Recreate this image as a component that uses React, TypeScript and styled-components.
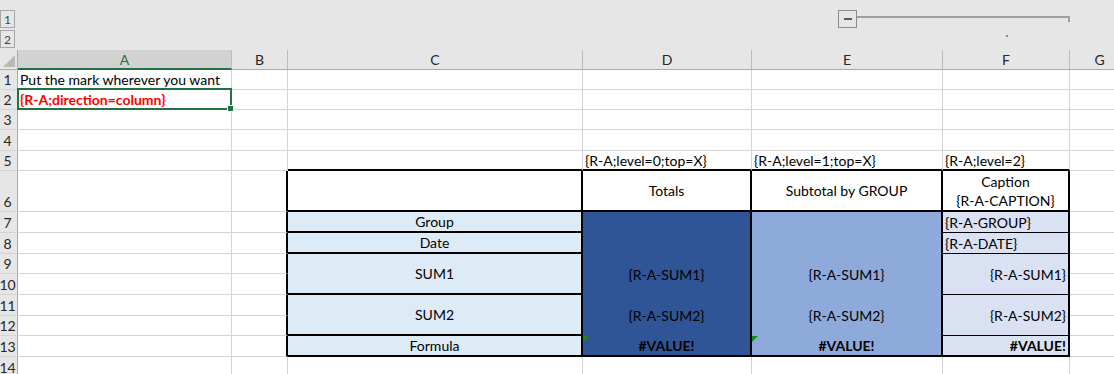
import React from 'react';
import styled, { createGlobalStyle, css } from 'styled-components';

type Edge = { w: number; c: string };
type Align = 'left' | 'center' | 'right';

interface Spec {
	text?: string;
	rs?: number;
	fill?: string;
	align?: Align;
	bold?: boolean;
	red?: boolean;
	right?: Edge;
	bottom?: Edge;
	selected?: boolean;
	flag?: boolean;
}

const GRID = '#d4d4d4';
const HEADER_BG = '#e6e6e6';
const EXCEL_GREEN = '#217346';

const PALE = '#ddebf7';
const NAVY = '#2f5597';
const SKY = '#8eaadb';
const MIST = '#d9e1f2';

const LINE: Edge = { w: 1, c: GRID };
const THICK: Edge = { w: 2, c: '#000' };
const THIN: Edge = { w: 1, c: '#000' };
const NONE: Edge = { w: 0, c: 'transparent' };

// row header + A..G
const COL_WIDTHS = [18, 214, 56, 295, 169, 191, 127, 60];
const ROW_HEIGHTS = [20, 20, 20, 21, 20, 41, 21, 21, 20, 21, 21, 20, 21, 21];
const LETTERS = ['A', 'B', 'C', 'D', 'E', 'F', 'G'];
const colTemplate = COL_WIDTHS.map((w) => `${w}px`).join(' ');

const key = (r: number, c: number) => `${r}:${c}`;

const body = (fill: string, extra: Spec): Spec => ({
	fill,
	align: 'center',
	right: THICK,
	bottom: THICK,
	...extra,
});

const specs: Record<string, Spec> = {
	[key(1, 1)]: { text: 'Put the mark wherever you want' },
	[key(2, 1)]: { text: '{R-A;direction=column}', red: true, bold: true, selected: true },
	[key(5, 3)]: { bottom: THICK },
	[key(5, 4)]: { text: '{R-A;level=0;top=X}', bottom: THICK },
	[key(5, 5)]: { text: '{R-A;level=1;top=X}', bottom: THICK },
	[key(5, 6)]: { text: '{R-A;level=2}', bottom: THICK },

	[key(6, 3)]: { right: THICK, bottom: THICK },
	[key(6, 4)]: { text: 'Totals', align: 'center', right: THICK, bottom: THICK },
	[key(6, 5)]: { text: 'Subtotal by GROUP', align: 'center', right: THICK, bottom: THICK },
	[key(6, 6)]: { text: 'Caption\n{R-A-CAPTION}', align: 'center', right: THICK, bottom: THICK },

	[key(7, 3)]: body(PALE, { text: 'Group' }),
	[key(8, 3)]: body(PALE, { text: 'Date' }),
	[key(9, 3)]: body(PALE, { text: 'SUM1', rs: 2 }),
	[key(11, 3)]: body(PALE, { text: 'SUM2', rs: 2 }),
	[key(13, 3)]: body(PALE, { text: 'Formula' }),

	[key(7, 4)]: body(NAVY, { rs: 2, bottom: NONE }),
	[key(9, 4)]: body(NAVY, { text: '{R-A-SUM1}', rs: 2, bottom: NONE }),
	[key(11, 4)]: body(NAVY, { text: '{R-A-SUM2}', rs: 2, bottom: NONE }),
	[key(13, 4)]: body(NAVY, { text: '#VALUE!', bold: true, flag: true }),

	[key(7, 5)]: body(SKY, { rs: 2, bottom: NONE }),
	[key(9, 5)]: body(SKY, { text: '{R-A-SUM1}', rs: 2, bottom: NONE }),
	[key(11, 5)]: body(SKY, { text: '{R-A-SUM2}', rs: 2, bottom: NONE }),
	[key(13, 5)]: body(SKY, { text: '#VALUE!', bold: true, flag: true }),

	[key(7, 6)]: body(MIST, { text: '{R-A-GROUP}', align: 'left', bottom: THIN }),
	[key(8, 6)]: body(MIST, { text: '{R-A-DATE}', align: 'left', bottom: THIN }),
	[key(9, 6)]: body(MIST, { text: '{R-A-SUM1}', align: 'right', rs: 2, bottom: THIN }),
	[key(11, 6)]: body(MIST, { text: '{R-A-SUM2}', align: 'right', rs: 2, bottom: THIN }),
	[key(13, 6)]: body(MIST, { text: '#VALUE!', align: 'right', bold: true }),
};

for (let r = 6; r <= 13; r++) specs[key(r, 2)] = { right: THICK };

const GlobalStyle = createGlobalStyle`
	html, body {
		margin: 0;
		padding: 0;
		background: #fff;
		overflow: hidden;
	}
	body {
		font-family: Lato, 'Liberation Sans', sans-serif;
	}
`;

const Window = styled.div`
	width: 1114px;
	height: 374px;
	overflow: hidden;
	background: #fff;
	display: flex;
	flex-direction: column;
`;

const OutlineBar = styled.div`
	flex: none;
	display: grid;
	grid-template-columns: ${colTemplate};
	grid-template-rows: 29px 21px;
	background: ${HEADER_BG};
`;

const LevelButton = styled.div<{ $row: number }>`
	grid-column: 1;
	grid-row: ${(p) => p.$row};
	align-self: ${(p) => (p.$row === 1 ? 'end' : 'start')};
	margin: ${(p) => (p.$row === 1 ? '0 0 1px 0' : '1px 0 0 0')};
	width: 13px;
	height: 16px;
	border: 1px solid #a6a6a6;
	display: flex;
	align-items: center;
	justify-content: center;
	font-size: 12px;
	color: #444;
`;

const GroupBracket = styled.div`
	grid-column: 6 / 8;
	grid-row: 1;
	align-self: end;
	display: flex;
	padding-left: 86px;
	margin-bottom: 1px;
`;

const CollapseButton = styled.div`
	flex: none;
	width: 17px;
	height: 16px;
	border: 1px solid #8c8c8c;
	display: flex;
	align-items: center;
	justify-content: center;

	&::before {
		content: '';
		width: 8px;
		height: 2px;
		background: #595959;
	}
`;

const BracketLine = styled.div`
	flex: 1;
	margin-top: 6px;
	height: 4px;
	border-top: 2px solid #a0a0a0;
	border-right: 2px solid #a0a0a0;
`;

const LevelDot = styled.div`
	grid-column: 7;
	grid-row: 2;
	justify-self: center;
	width: 2px;
	height: 2px;
	margin-top: 6px;
	background: #8a8a8a;
`;

const Sheet = styled.div`
	display: grid;
	grid-template-columns: ${colTemplate};
	grid-template-rows: 20px ${ROW_HEIGHTS.map((h) => `${h}px`).join(' ')};
	font-size: 14px;
	color: #000;
`;

const Corner = styled.div`
	grid-column: 1;
	grid-row: 1;
	background: ${HEADER_BG};
	border-right: 1px solid #ababab;
	border-bottom: 1px solid #ababab;
	display: flex;
	align-items: flex-end;
	justify-content: flex-end;
	padding: 0 2px 2px 0;

	&::after {
		content: '';
		width: 12px;
		height: 12px;
		background: #b9b9b9;
		clip-path: polygon(100% 0, 100% 100%, 0 100%);
	}
`;

const ColumnHeader = styled.div<{ $selected?: boolean }>`
	grid-row: 1;
	display: flex;
	align-items: center;
	justify-content: center;
	background: ${(p) => (p.$selected ? '#d2d2d2' : HEADER_BG)};
	color: ${(p) => (p.$selected ? EXCEL_GREEN : '#262626')};
	border-right: 1px solid #bcbcbc;
	border-bottom: ${(p) => (p.$selected ? `2px solid ${EXCEL_GREEN}` : '1px solid #ababab')};
`;

const RowHeader = styled.div`
	grid-column: 1;
	display: flex;
	align-items: flex-end;
	justify-content: center;
	padding: 0 2px 1px 0;
	background: ${HEADER_BG};
	color: #262626;
	border-right: 1px solid #ababab;
	border-bottom: 1px solid ${GRID};
`;

const justify = { left: 'flex-start', center: 'center', right: 'flex-end' };

const Cell = styled.div<{
	$fill?: string;
	$align: Align;
	$bold?: boolean;
	$red?: boolean;
	$right: Edge;
	$bottom: Edge;
	$selected?: boolean;
	$flag?: boolean;
}>`
	position: relative;
	display: flex;
	align-items: center;
	justify-content: ${(p) => justify[p.$align]};
	padding: 0 2px;
	background: ${(p) => p.$fill || 'transparent'};
	border-right: ${(p) => `${p.$right.w}px solid ${p.$right.c}`};
	border-bottom: ${(p) => `${p.$bottom.w}px solid ${p.$bottom.c}`};
	white-space: pre;
	text-align: center;
	line-height: 19px;
	font-weight: ${(p) => (p.$bold ? 700 : 400)};
	color: ${(p) => (p.$red ? '#ff0000' : '#000')};

	${(p) =>
		p.$selected &&
		css`
			&::after {
				content: '';
				position: absolute;
				top: -2px;
				left: -1px;
				right: -1px;
				bottom: -1px;
				border: 2px solid ${EXCEL_GREEN};
			}
			&::before {
				content: '';
				position: absolute;
				right: -3px;
				bottom: -3px;
				width: 5px;
				height: 5px;
				background: ${EXCEL_GREEN};
				border: 1px solid #fff;
				z-index: 1;
			}
		`}

	${(p) =>
		p.$flag &&
		css`
			&::before {
				content: '';
				position: absolute;
				top: 0;
				left: 0;
				border-top: 6px solid #1e8a1e;
				border-right: 6px solid transparent;
			}
		`}
`;

const buildCells = () => {
	const covered = new Set<string>();
	Object.entries(specs).forEach(([k, s]) => {
		const [r, c] = k.split(':').map(Number);
		for (let i = 1; i < (s.rs || 1); i++) covered.add(key(r + i, c));
	});

	const cells: React.ReactNode[] = [];
	for (let r = 1; r <= ROW_HEIGHTS.length; r++) {
		cells.push(
			<RowHeader key={`h${r}`} style={{ gridRow: r + 1 }}>
				{r}
			</RowHeader>
		);
		for (let c = 1; c <= LETTERS.length; c++) {
			const k = key(r, c);
			if (covered.has(k)) continue;
			const s = specs[k] || {};
			cells.push(
				<Cell
					key={k}
					style={{ gridColumn: c + 1, gridRow: `${r + 1} / span ${s.rs || 1}` }}
					$fill={s.fill}
					$align={s.align || 'left'}
					$bold={s.bold}
					$red={s.red}
					$right={s.right || LINE}
					$bottom={s.bottom || LINE}
					$selected={s.selected}
					$flag={s.flag}
				>
					{s.text}
				</Cell>
			);
		}
	}
	return cells;
};

const App = () => {
	return (
		<Window>
			<GlobalStyle />
			<OutlineBar>
				<LevelButton $row={1}>1</LevelButton>
				<LevelButton $row={2}>2</LevelButton>
				<GroupBracket>
					<CollapseButton />
					<BracketLine />
				</GroupBracket>
				<LevelDot />
			</OutlineBar>
			<Sheet>
				<Corner />
				{LETTERS.map((l, i) => (
					<ColumnHeader key={l} style={{ gridColumn: i + 2 }} $selected={l === 'A'}>
						{l}
					</ColumnHeader>
				))}
				{buildCells()}
			</Sheet>
		</Window>
	);
};

export default App;
